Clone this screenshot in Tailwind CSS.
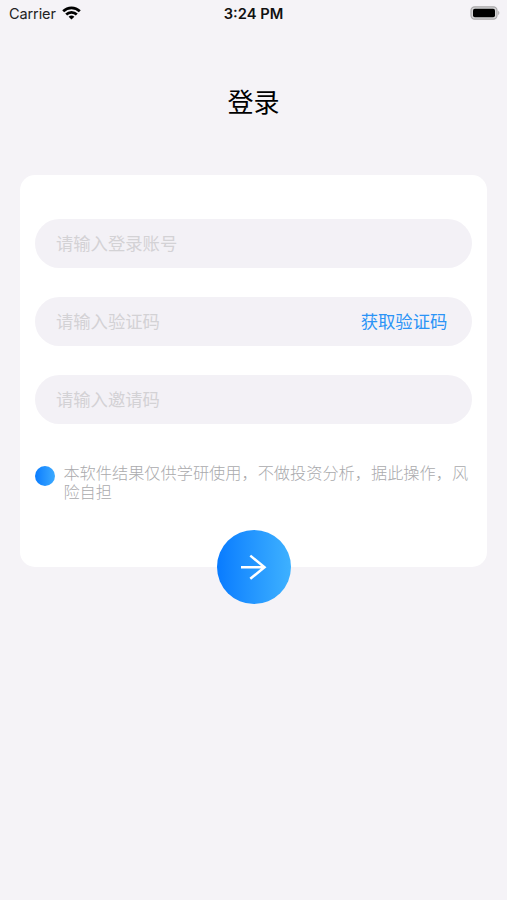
<!DOCTYPE html>
<html lang="zh-CN">
<head>
<meta charset="utf-8">
<title>登录</title>
<script src="https://cdn.jsdelivr.net/npm/@tailwindcss/browser@4"></script>
</head>
<body class="h-[900px] w-[507px] overflow-hidden bg-[#f5f3f7] font-['Inter','Noto_Sans_CJK_SC',sans-serif]">
<header class="grid h-7 grid-cols-3 items-center pl-[7px] pr-[7px] text-[14.5px] leading-7 text-[#222]">
  <div class="flex items-center gap-[6px] pl-[2px]">
    <span class="tracking-[-0.1px]">Carrier</span>
    <svg class="-mt-0.5 h-[14px] w-[19px]" viewBox="0 0 19 14" fill="none" stroke="#000" stroke-width="2.7">
      <path d="M1.2 5.2a11.8 11.8 0 0 1 16.6 0"/>
      <path d="M4.2 8.5a7.6 7.6 0 0 1 10.6 0"/>
      <path d="M9.5 13.6 6.6 10.8a4.2 4.2 0 0 1 5.8 0Z" fill="#000" stroke="none"/>
    </svg>
  </div>
  <span class="text-center text-[14.7px] font-semibold text-[#111]">3:24 PM</span>
  <svg class="-mr-px -mt-0.5 h-[14px] w-[31px] justify-self-end" viewBox="0 0 31 14">
    <rect x="1" y=".8" width="26" height="12.4" rx="3.6" fill="#d5d4d6" stroke="#aaa9ab" stroke-width="1.2"/>
    <rect x="3" y="2.8" width="22" height="8.4" rx="1.8" fill="#000"/>
    <path d="M28.2 4.8q2.4 2.2 0 4.4Z" fill="#aaa9ab"/>
  </svg>
</header>
<main>
  <h1 class="mt-[55px] text-center text-[26px] leading-10 text-black">登录</h1>
  <section class="ml-[20.4px] mt-[52px] h-[392.4px] w-[467px] rounded-[15px] bg-white px-[15px] pt-11">
    <form class="flex flex-col gap-[29.5px] text-[17.35px] text-[#d3d2d5]">
      <div class="flex h-[48.5px] items-center rounded-full bg-[#f3f1f6] px-[20.5px] pt-0.5"><span>请输入登录账号</span></div>
      <div class="flex h-[48.5px] items-center justify-between rounded-full bg-[#f3f1f6] pl-[20.5px] pr-[25px] pt-0.5"><span>请输入验证码</span><button type="button" class="text-[#2b94f6]">获取验证码</button></div>
      <div class="flex h-[48.5px] items-center rounded-full bg-[#f3f1f6] px-[20.5px] pt-0.5"><span>请输入邀请码</span></div>
    </form>
    <div class="mt-[39px] flex gap-[8.5px]">
      <i class="mt-[3.5px] size-[19.5px] shrink-0 rounded-full bg-linear-to-r from-[#087cff] to-[#3caaff]"></i>
      <p class="w-[407px] pt-px text-[16.2px] font-light leading-[19.5px] text-[#aaaaad]">本软件结果仅供学研使用，不做投资分析，据此操作，风险自担</p>
    </div>
  </section>
  <button type="button" aria-label="登录" class="relative mx-auto -mt-[37.4px] flex size-[74px] items-center justify-center rounded-full bg-linear-to-r from-[#087bff] to-[#3eb1ff]">
    <svg class="size-[27px]" viewBox="0 0 27 27" fill="none" stroke="#fff" stroke-width="2.5"><path d="M1 13.3h23.5M10.3 1.6 24.5 13.3 10.3 24.8"/></svg>
  </button>
</main>
</body>
</html>
